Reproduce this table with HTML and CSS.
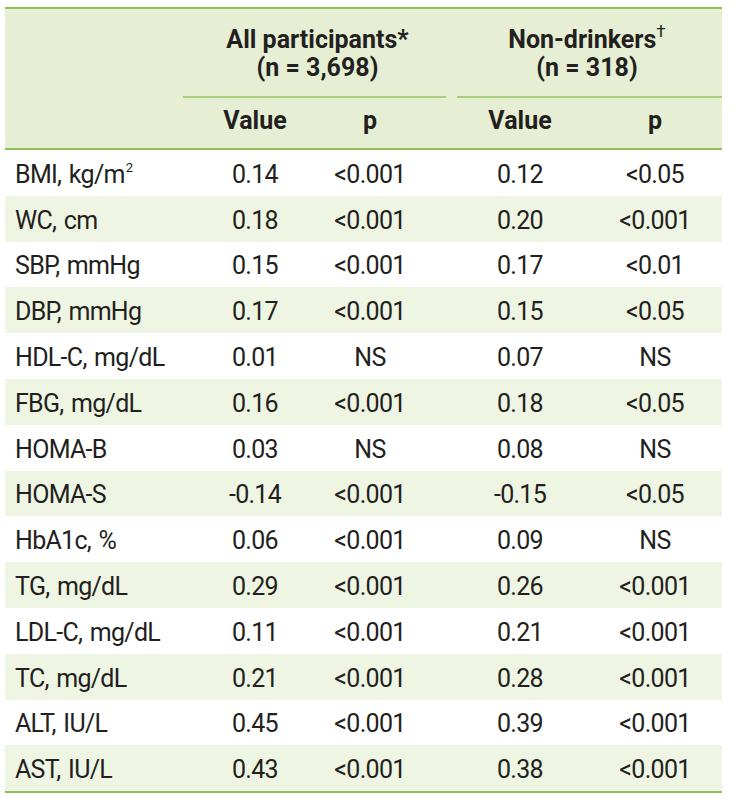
FILE: index.html
```html
<!DOCTYPE html>
<html>
<head>
<meta charset="utf-8">
<link rel="stylesheet" href="styles.css">
</head>
<body>
<div class="tbl">
  <div class="head">
    <div class="grp grp1"><div>All participants*</div><div>(n = 3,698)</div></div>
    <div class="grp grp2"><div>Non-drinkers<sup class="dag">†</sup></div><div>(n = 318)</div></div>
    <div class="rule rule1"></div>
    <div class="rule rule2"></div>
    <div class="sub c2">Value</div>
    <div class="sub c3">p</div>
    <div class="sub c5">Value</div>
    <div class="sub c6">p</div>
  </div>
  <div class="row"><div class="lbl">BMI, kg/m<sup class="sq">2</sup></div><div class="c2">0.14</div><div class="c3">&lt;0.001</div><div class="c5">0.12</div><div class="c6">&lt;0.05</div></div>
  <div class="row alt"><div class="lbl">WC, cm</div><div class="c2">0.18</div><div class="c3">&lt;0.001</div><div class="c5">0.20</div><div class="c6">&lt;0.001</div></div>
  <div class="row"><div class="lbl">SBP, mmHg</div><div class="c2">0.15</div><div class="c3">&lt;0.001</div><div class="c5">0.17</div><div class="c6">&lt;0.01</div></div>
  <div class="row alt"><div class="lbl">DBP, mmHg</div><div class="c2">0.17</div><div class="c3">&lt;0.001</div><div class="c5">0.15</div><div class="c6">&lt;0.05</div></div>
  <div class="row"><div class="lbl">HDL-C, mg/dL</div><div class="c2">0.01</div><div class="c3">NS</div><div class="c5">0.07</div><div class="c6">NS</div></div>
  <div class="row alt"><div class="lbl">FBG, mg/dL</div><div class="c2">0.16</div><div class="c3">&lt;0.001</div><div class="c5">0.18</div><div class="c6">&lt;0.05</div></div>
  <div class="row"><div class="lbl">HOMA-B</div><div class="c2">0.03</div><div class="c3">NS</div><div class="c5">0.08</div><div class="c6">NS</div></div>
  <div class="row alt"><div class="lbl">HOMA-S</div><div class="c2">-0.14</div><div class="c3">&lt;0.001</div><div class="c5">-0.15</div><div class="c6">&lt;0.05</div></div>
  <div class="row"><div class="lbl">HbA1c, %</div><div class="c2">0.06</div><div class="c3">&lt;0.001</div><div class="c5">0.09</div><div class="c6">NS</div></div>
  <div class="row alt"><div class="lbl">TG, mg/dL</div><div class="c2">0.29</div><div class="c3">&lt;0.001</div><div class="c5">0.26</div><div class="c6">&lt;0.001</div></div>
  <div class="row"><div class="lbl">LDL-C, mg/dL</div><div class="c2">0.11</div><div class="c3">&lt;0.001</div><div class="c5">0.21</div><div class="c6">&lt;0.001</div></div>
  <div class="row alt"><div class="lbl">TC, mg/dL</div><div class="c2">0.21</div><div class="c3">&lt;0.001</div><div class="c5">0.28</div><div class="c6">&lt;0.001</div></div>
  <div class="row"><div class="lbl">ALT, IU/L</div><div class="c2">0.45</div><div class="c3">&lt;0.001</div><div class="c5">0.39</div><div class="c6">&lt;0.001</div></div>
  <div class="row alt"><div class="lbl">AST, IU/L</div><div class="c2">0.43</div><div class="c3">&lt;0.001</div><div class="c5">0.38</div><div class="c6">&lt;0.001</div></div>
</div>
</body>
</html>
```

FILE: styles.css
```css
html, body {
  margin: 0;
  padding: 0;
  background: #ffffff;
}
body {
  padding: 7px 11px 0 5px;
  font-family: Roboto, "Open Sans", sans-serif;
  font-size: 25px;
  color: #231f20;
}
.tbl {
  width: 717px;
  border-top: 2px solid #8fc158;
  border-bottom: 2px solid #8fc158;
}
.head, .row {
  display: grid;
  grid-template-columns: 178px 144px 86px 39px 136px 134px;
}
.head {
  background: #e6efd3;
  border-bottom: 2px solid #8fc158;
  grid-template-rows: 87px 1px 51px;
  font-weight: 700;
}
.grp {
  text-align: center;
  line-height: 28px;
  padding-top: 17px;
}
.grp1 { grid-column: 2 / 5; grid-row: 1; }
.grp2 { grid-column: 5 / 7; grid-row: 1; }
.rule {
  grid-row: 2;
  height: 2px;
  background: #a9cf7d;
}
.rule1 { grid-column: 2 / 5; margin-right: 6px; }
.rule2 { grid-column: 5 / 7; margin-left: 5px; }
.sub {
  grid-row: 3;
  text-align: center;
  align-self: center;
  line-height: 28px;
  margin-top: -4px;
}
.c2 { grid-column: 2; text-align: center; }
.c3 { grid-column: 3; text-align: center; }
.c5 { grid-column: 5; text-align: center; }
.c6 { grid-column: 6; text-align: center; }
.row {
  box-sizing: border-box;
  height: 45.8px;
  padding-top: 4px;
  align-items: center;
  line-height: 28px;
  letter-spacing: -0.7px;
  word-spacing: 2px;
}
.row.alt { background: #eef5e3; }
.lbl { padding-left: 10px; }
.sq {
  font-size: 13px;
  vertical-align: 0;
  position: relative;
  top: -11px;
  left: 1px;
  line-height: 0;
}
.dag {
  font-size: 17px;
  font-weight: 400;
  line-height: 0;
  vertical-align: 0;
  position: relative;
  top: -11px;
}
```
